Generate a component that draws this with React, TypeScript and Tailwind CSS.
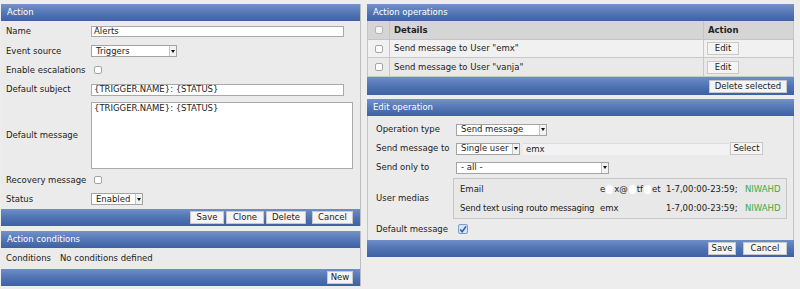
import React from "react";

const font = { fontFamily: '"DejaVu Sans", Verdana, sans-serif' };

const Header = ({ title }: { title: string }) => (
  <div className="h-[17px] flex items-center px-[6px] text-white bg-gradient-to-b from-[#7592c9] via-[#5477b6] to-[#3d61a2]">
    {title}
  </div>
);

const Footer = ({ children, className = "" }: { children: React.ReactNode; className?: string }) => (
  <div
    className={`h-[17px] flex items-center justify-end gap-[2px] pr-[7px] bg-gradient-to-b from-[#6f8ec7] via-[#5073b3] to-[#3e61a1] ${className}`}
  >
    {children}
  </div>
);

const Btn = ({ label, w }: { label: string; w: string }) => (
  <div
    className={`h-[13px] ${w} flex items-center justify-center bg-[#f4f4f4] border border-[#c9c9c9] text-[#222] leading-none`}
  >
    {label}
  </div>
);

const Select = ({ value, w }: { value: string; w: string }) => (
  <div className={`h-[12px] ${w} flex items-stretch bg-white border border-[#a3a3a3] leading-none`}>
    <div className="flex-1 flex items-center pl-[4px] text-[#222]">{value}</div>
    <div className="w-[7px] flex items-center justify-center border-l border-[#c4c4c4] bg-[#f2f2f2]">
      <div className="w-0 h-0 border-l-[2px] border-r-[2px] border-t-[3px] border-l-transparent border-r-transparent border-t-[#111]" />
    </div>
  </div>
);

const Check = ({ checked = false }: { checked?: boolean }) =>
  checked ? (
    <div className="w-[10px] h-[10px] rounded-[2px] border border-[#7d9cc9] bg-[#d6e4f6] flex items-center justify-center">
      <svg width="9" height="9" viewBox="0 0 9 9">
        <path d="M1.5 4.5 L3.6 7 L8 1" fill="none" stroke="#2b5ca8" strokeWidth="1.8" />
      </svg>
    </div>
  ) : (
    <div className="w-[8px] h-[8px] rounded-[2px] border border-[#a5a5a5] bg-white" />
  );

const Row = ({ label, h, children }: { label: string; h: string; children: React.ReactNode }) => (
  <div className={`flex items-center ${h}`}>
    <div className="w-[90px] pl-[5px] text-[#222]">{label}</div>
    <div className="flex-1 flex items-center">{children}</div>
  </div>
);

const Input = ({ value, w, h = "h-[11px]" }: { value: string; w: string; h?: string }) => (
  <div className={`${h} ${w} bg-white border border-[#a9a9a9] flex items-center pl-[2px] leading-none text-[#222]`}>
    {value}
  </div>
);

const Blob = () => <span className="inline-block w-[7px] h-[9px] rounded-full bg-white align-middle mx-[1px]" />;

const OpRow = ({ label, h, children }: { label: string; h: string; children: React.ReactNode }) => (
  <div className={`flex items-center ${h}`}>
    <div className="w-[88px] pl-[8px] text-[#222]">{label}</div>
    <div className="flex-1 flex items-center">{children}</div>
  </div>
);

export default function App() {
  return (
    <div className="w-[800px] h-[289px] bg-[#ededed] flex pt-[4px] text-[8.5px] overflow-hidden" style={font}>
      {/* left column */}
      <div className="w-[360px] ml-[1px] flex flex-col">
        <div className="border-r border-[#bdbdbd]">
          <Header title="Action" />
          <div className="bg-[#ebebeb]">
            <Row label="Name" h="h-[20px]">
              <Input value="Alerts" w="w-[253px]" />
            </Row>
            <Row label="Event source" h="h-[20px]">
              <Select value="Triggers" w="w-[86px]" />
            </Row>
            <Row label="Enable escalations" h="h-[18px]">
              <div className="pl-[3px]">
                <Check />
              </div>
            </Row>
            <Row label="Default subject" h="h-[21px]">
              <Input value="{TRIGGER.NAME}: {STATUS}" w="w-[253px]" h="h-[12px]" />
            </Row>
            <div className="flex h-[71px]">
              <div className="w-[90px] pl-[5px] flex items-center text-[#222]">Default message</div>
              <div className="flex-1 pt-[2px]">
                <div className="w-[262px] h-[67px] bg-white border border-[#a9a9a9] pl-[2px] pt-[1px] leading-none text-[#222]">
                  {"{TRIGGER.NAME}: {STATUS}"}
                </div>
              </div>
            </div>
            <Row label="Recovery message" h="h-[18px]">
              <div className="pl-[3px]">
                <Check />
              </div>
            </Row>
            <Row label="Status" h="h-[20px]">
              <Select value="Enabled" w="w-[52px]" />
            </Row>
          </div>
          <Footer>
            <Btn label="Save" w="w-[34px]" />
            <Btn label="Clone" w="w-[38px]" />
            <Btn label="Delete" w="w-[40px]" />
            <div className="w-[2px]" />
            <Btn label="Cancel" w="w-[41px]" />
          </Footer>
        </div>

        <div className="mt-[5px] border-r border-[#bdbdbd]">
          <Header title="Action conditions" />
          <div className="h-[21px] bg-[#ebebeb] flex items-center text-[#222]">
            <div className="w-[59px] pl-[5px]">Conditions</div>
            <div>No conditions defined</div>
          </div>
          <Footer>
            <Btn label="New" w="w-[26px]" />
          </Footer>
        </div>
      </div>

      {/* right column */}
      <div className="w-[427px] ml-[6px] flex flex-col">
        <div>
          <Header title="Action operations" />
          <div className="border-x border-[#c4c4c4]">
            <div className="flex h-[19px] bg-[#d5d5d5] font-bold text-[#222] border-b border-[#c4c4c4]">
              <div className="w-[22px] flex items-center justify-center border-r border-[#c4c4c4]">
                <div className="w-[8px] h-[8px] rounded-[2px] border border-[#b5b5b5] bg-[#f5f5f5]" />
              </div>
              <div className="flex-1 flex items-center pl-[4px] border-r border-[#c4c4c4]">Details</div>
              <div className="w-[89px] flex items-center pl-[4px]">Action</div>
            </div>
            {[
              { t: 'Send message to User "emx"', bg: "bg-[#f1f1f1]", h: "h-[18px]" },
              { t: 'Send message to User "vanja"', bg: "bg-[#e9e9e9]", h: "h-[19px]" },
            ].map((r, i) => (
              <div key={i} className={`flex ${r.h} ${r.bg} text-[#222] border-b border-[#c8c8c8]`}>
                <div className="w-[22px] flex items-center justify-center border-r border-[#c8c8c8]">
                  <Check />
                </div>
                <div className="flex-1 flex items-center pl-[4px] border-r border-[#c8c8c8]">{r.t}</div>
                <div className="w-[89px] flex items-center pl-[3px]">
                  <Btn label="Edit" w="w-[32px]" />
                </div>
              </div>
            ))}
          </div>
          <Footer className="h-[18px] pr-[5px]">
            <Btn label="Delete selected" w="w-[78px]" />
          </Footer>
        </div>

        <div className="mt-[4px]">
          <Header title="Edit operation" />
          <div className="bg-[#ebebeb] border-x border-[#c4c4c4] pt-[4px] pb-[1px]">
            <OpRow label="Operation type" h="h-[19px]">
              <Select value="Send message" w="w-[91px]" />
            </OpRow>
            <OpRow label="Send message to" h="h-[19px]">
              <Select value="Single user" w="w-[64px]" />
              <div className="ml-[3px] w-[206px] h-[12px] bg-[#f2f2f2] border-t border-[#dcdcdc] flex items-center pl-[3px] leading-none text-[#222]">
                emx
              </div>
              <div className="ml-[1px]">
                <Btn label="Select" w="w-[33px]" />
              </div>
            </OpRow>
            <OpRow label="Send only to" h="h-[19px]">
              <Select value="- all -" w="w-[153px]" />
            </OpRow>
            <div className="flex items-center mt-[1px]">
              <div className="w-[85px] pl-[8px] text-[#222]">User medias</div>
              <div className="w-[334px] h-[41px] border border-[#c6c6c6] bg-[#e8e8e8] text-[#222] flex flex-col">
                <div className="flex items-center h-[20px]">
                  <div className="w-[146px] pl-[6px]">Email</div>
                  <div className="w-[66px] whitespace-nowrap">
                    e<Blob />x@<Blob />tf<Blob />et
                  </div>
                  <div className="w-[79px] whitespace-nowrap">1-7,00:00-23:59;</div>
                  <div className="text-[#3dab45]">NIWAHD</div>
                </div>
                <div className="flex items-center h-[19px]">
                  <div className="w-[146px] pl-[6px] whitespace-nowrap tracking-[-0.2px]">
                    Send text using routo messaging
                  </div>
                  <div className="w-[66px]">emx</div>
                  <div className="w-[79px] whitespace-nowrap">1-7,00:00-23:59;</div>
                  <div className="text-[#3dab45]">NIWAHD</div>
                </div>
              </div>
            </div>
            <OpRow label="Default message" h="h-[20px]">
              <div className="pl-[2px]">
                <Check checked />
              </div>
            </OpRow>
          </div>
          <Footer className="h-[16px] pr-[5px] gap-[7px]">
            <Btn label="Save" w="w-[28px]" />
            <Btn label="Cancel" w="w-[44px]" />
          </Footer>
        </div>
      </div>
    </div>
  );
}
